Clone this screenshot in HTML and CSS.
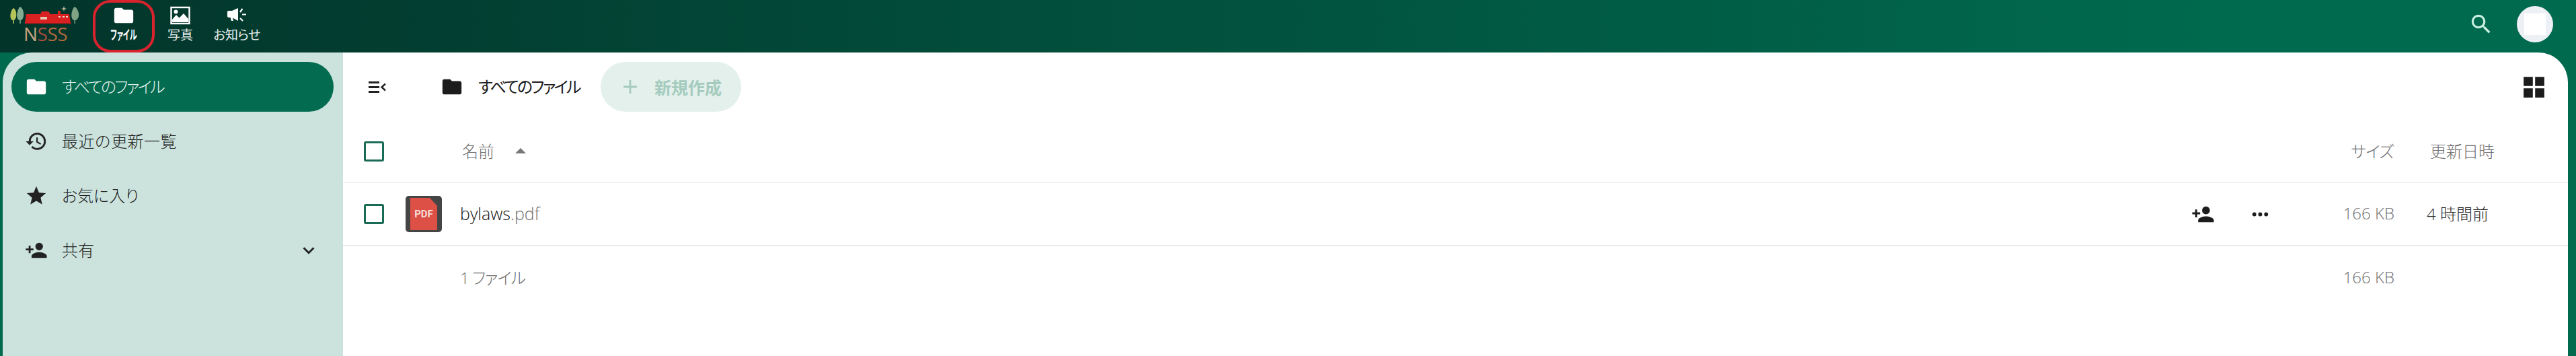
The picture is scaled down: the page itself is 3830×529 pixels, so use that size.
FILE: index.html
```html
<!DOCTYPE html>
<html lang="ja">
<head>
    <meta charset="UTF-8">
    <meta name="viewport" content="width=device-width, initial-scale=1.0">
    <title>すべてのファイル - NSSS</title>
    <link rel="stylesheet" href="styles.css">
</head>
<body>
    <svg class="sprite" xmlns="http://www.w3.org/2000/svg">
        <symbol id="i-folder" viewBox="0 0 24 24"><path d="M10,4H4C2.89,4 2,4.89 2,6V18A2,2 0 0,0 4,20H20A2,2 0 0,0 22,18V8C22,6.89 21.1,6 20,6H12L10,4Z"/></symbol>
        <symbol id="i-history" viewBox="0 0 24 24"><path d="M13.5,8H12V13L16.28,15.54L17,14.33L13.5,12.25V8M13,3A9,9 0 0,0 4,12H1L4.96,16.03L9,12H6A7,7 0 0,1 13,5A7,7 0 0,1 20,12A7,7 0 0,1 13,19C11.07,19 9.32,18.21 8.06,16.94L6.64,18.36C8.27,20 10.5,21 13,21A9,9 0 0,0 22,12A9,9 0 0,0 13,3"/></symbol>
        <symbol id="i-star" viewBox="0 0 24 24"><path d="M12,17.27L18.18,21L16.54,13.97L22,9.24L14.81,8.62L12,2L9.19,8.62L2,9.24L7.45,13.97L5.82,21L12,17.27Z"/></symbol>
        <symbol id="i-share" viewBox="0 0 24 24"><path d="M15,14C12.33,14 7,15.33 7,18V20H23V18C23,15.33 17.67,14 15,14M6,10V7H4V10H1V12H4V15H6V12H9V10M15,12A4,4 0 0,0 19,8A4,4 0 0,0 15,4A4,4 0 0,0 11,8A4,4 0 0,0 15,12Z"/></symbol>
        <symbol id="i-chevron" viewBox="0 0 24 24"><path d="M7.41,8.58L12,13.17L16.59,8.58L18,10L12,16L6,10L7.41,8.58Z"/></symbol>
        <symbol id="i-search" viewBox="0 0 24 24"><path d="M9.5,3A6.5,6.5 0 0,1 16,9.5C16,11.11 15.41,12.59 14.44,13.73L14.71,14H15.5L20.5,19L19,20.5L14,15.5V14.71L13.73,14.44C12.59,15.41 11.11,16 9.5,16A6.5,6.5 0 0,1 3,9.5A6.5,6.5 0 0,1 9.5,3M9.5,5C7,5 5,7 5,9.5C5,12 7,14 9.5,14C12,14 14,12 14,9.5C14,7 12,5 9.5,5Z"/></symbol>
        <symbol id="i-grid" viewBox="0 0 24 24"><path d="M3,11H11V3H3M3,21H11V13H3M13,21H21V13H13M13,3V11H21V3"/></symbol>
        <symbol id="i-dots" viewBox="0 0 24 24"><path d="M16,12A2,2 0 0,1 18,10A2,2 0 0,1 20,12A2,2 0 0,1 18,14A2,2 0 0,1 16,12M10,12A2,2 0 0,1 12,10A2,2 0 0,1 14,12A2,2 0 0,1 12,14A2,2 0 0,1 10,12M4,12A2,2 0 0,1 6,10A2,2 0 0,1 8,12A2,2 0 0,1 6,14A2,2 0 0,1 4,12Z"/></symbol>
        <symbol id="i-plus" viewBox="0 0 24 24"><path d="M19,13H13V19H11V13H5V11H11V5H13V11H19V13Z"/></symbol>
    </svg>

    <header class="topbar">
        <a class="logo">
            <svg class="logo-art" viewBox="0 0 130 28" xmlns="http://www.w3.org/2000/svg">
                <path d="M20,3 C24,5 25,12 24,16 C23,20 21,21 20.8,21 V26 H19.2 V21 C18,21 16,20 15.5,16 C15,12 17,5 20,3Z" fill="#b5c45a"/>
                <path d="M30,1 C34,3 36,10 35,15 C34,20 32,21 30.8,21 V26 H29.2 V21 C28,21 26,20 25.3,15 C25,10 27,3 30,1Z" fill="#83ab8f"/>
                <path d="M111,1 C115,3 118,10 117,15 C116,20 113,21 112,21 V26 H110.5 V21 C109,21 107,20 106.3,15 C106,10 108,3 111,1Z" fill="#7fa383"/>
                <path d="M37,25 L39,12 H60 L62,8 H72 L75,12 H86 V7 H90 V12 H103 L105,25Z" fill="#d92122"/>
                <rect x="37" y="25" width="69" height="1.5" fill="#a51c1c"/>
                <rect x="60" y="16" width="10" height="4" fill="#e8c7b0"/>
                <rect x="87" y="15" width="3" height="2" fill="#f3d9c8"/>
                <rect x="93" y="15" width="3" height="2" fill="#f3d9c8"/>
                <rect x="98" y="15" width="3" height="2" fill="#f3d9c8"/>
                <path d="M95,0 L96,3 L99,4 L96,5 L95,8 L94,5 L91,4 L94,3Z" fill="#b9b59a"/>
            </svg>
            <span class="logo-name"><span class="n1">N</span><span class="n2">S</span><span class="n3">S</span><span class="n3">S</span></span>
        </a>
        <nav class="app-nav">
            <a class="app-item active">
                <svg class="app-icon"><use href="#i-folder"/></svg>
                <span>ファイル</span>
            </a>
            <a class="app-item">
                <svg class="app-icon" viewBox="0 0 34 34" xmlns="http://www.w3.org/2000/svg">
                    <rect x="3.5" y="5" width="27" height="24" fill="none" stroke="#fff" stroke-width="2.4"/>
                    <circle cx="10.5" cy="11.5" r="3" fill="#fff"/>
                    <path d="M5,27 V23 L11,16 L15.500,20.500 L22,14 L29,22 V27Z" fill="#fff"/>
                </svg>
                <span>写真</span>
            </a>
            <a class="app-item">
                <svg class="app-icon" viewBox="0 0 34 34" xmlns="http://www.w3.org/2000/svg">
                    <path d="M3,12 C3,10.500 4,10 5,10 H10 L19,6 V25 L11,20.500 L12,25 H9 L7.500,20 H5 C4,20 3,19 3,18Z" fill="#fff"/>
                    <path d="M22,12 L25.500,7 M25,15.500 H31 M22,21 L26,25" stroke="#fff" stroke-width="2.200" fill="none"/>
                </svg>
                <span class="notice-label">お知らせ</span>
            </a>
        </nav>
        <div class="top-right">
            <svg class="search-icon"><use href="#i-search"/></svg>
            <div class="avatar"><div class="avatar-img"></div></div>
        </div>
    </header>

    <div class="content">
        <aside class="sidebar">
            <a class="side-item current">
                <svg class="side-icon"><use href="#i-folder"/></svg>
                <span class="kana">すべてのファイル</span>
            </a>
            <a class="side-item">
                <svg class="side-icon"><use href="#i-history"/></svg>
                <span class="full">最近の更新一覧</span>
            </a>
            <a class="side-item">
                <svg class="side-icon"><use href="#i-star"/></svg>
                <span>お気に入り</span>
            </a>
            <a class="side-item">
                <svg class="side-icon"><use href="#i-share"/></svg>
                <span>共有</span>
                <svg class="side-icon side-chevron"><use href="#i-chevron"/></svg>
            </a>
        </aside>

        <main class="files">
            <div class="toolbar">
                <svg class="toggle-icon" viewBox="0 0 26 17" xmlns="http://www.w3.org/2000/svg">
                    <path d="M0,1.500 H16 M0,8.500 H16 M0,15.500 H16" stroke="#222" stroke-width="3" fill="none"/>
                    <path d="M25,3.500 L19.500,8.500 L25,13.500" stroke="#222" stroke-width="2.400" fill="none"/>
                </svg>
                <svg class="crumb-icon"><use href="#i-folder"/></svg>
                <span class="crumb-text kana">すべてのファイル</span>
                <button class="new-btn" type="button">
                    <svg class="plus-icon"><use href="#i-plus"/></svg>
                    <span>新規作成</span>
                </button>
                <svg class="grid-icon"><use href="#i-grid"/></svg>
            </div>

            <div class="row head-row">
                <div class="cell-check"><span class="checkbox"></span></div>
                <div></div>
                <div class="cell-name head-name">名前<span class="sort-arrow"></span></div>
                <div></div>
                <div></div>
                <div class="cell-size head-size">サイズ</div>
                <div class="cell-date head-date">更新日時</div>
            </div>

            <div class="row file-row">
                <div class="cell-check"><span class="checkbox"></span></div>
                <div class="cell-icon">
                    <svg class="pdf-icon" viewBox="0 0 54 54" xmlns="http://www.w3.org/2000/svg">
                        <rect width="54" height="54" rx="5" fill="#454545"/>
                        <path d="M7,3 H36 L47,15 V51 H7Z" fill="#dc5046"/>
                        <text x="27" y="32" text-anchor="middle" class="pdf-label">PDF</text>
                    </svg>
                </div>
                <div class="cell-name file-name">bylaws<span class="ext">.pdf</span></div>
                <div class="cell-action"><svg class="row-icon"><use href="#i-share"/></svg></div>
                <div class="cell-action"><svg class="row-icon"><use href="#i-dots"/></svg></div>
                <div class="cell-size">166 KB</div>
                <div class="cell-date">4 時間前</div>
            </div>

            <div class="row foot-row">
                <div></div>
                <div></div>
                <div class="cell-name foot-name">1 ファイル</div>
                <div></div>
                <div></div>
                <div class="cell-size">166 KB</div>
                <div></div>
            </div>
        </main>
    </div>
</body>
</html>
```

FILE: styles.css
```css
* {
    box-sizing: border-box;
}
html, body {
    height: 100%;
}
body {
    margin: 0;
    display: flex;
    flex-direction: column;
    background-color: #006a4e;
    color: #1c1c1c;
    font-family: "Open Sans", "Noto Sans CJK JP", sans-serif;
    font-size: 24px;
    font-weight: 300;
    font-feature-settings: "palt";
    overflow: hidden;
}
.sprite {
    display: none;
}
svg {
    display: block;
    flex: none;
    fill: currentColor;
}
.kana {
    letter-spacing: -2.6px;
}
.full {
    font-feature-settings: normal;
    letter-spacing: 0.4px;
}

/* top bar */
.topbar {
    display: flex;
    flex: none;
    align-items: center;
    height: 78px;
    background: linear-gradient(90deg, #03342a 0%, #006a4e 86%);
}
.logo {
    display: flex;
    flex-direction: column;
    flex: none;
    width: 142px;
    padding-top: 9px;
    height: 100%;
}
.logo-art {
    width: 130px;
    height: 28px;
}
.logo-name {
    margin: 0 0 0 35px;
    font-size: 28px;
    font-weight: 400;
    line-height: 27px;
    letter-spacing: -0.5px;
}
.n1 { color: #c6a67e; }
.n2 { color: #a94c3c; }
.n3 { color: #b2683f; }
.app-nav {
    display: flex;
    height: 100%;
}
.app-item {
    position: relative;
    display: flex;
    flex-direction: column;
    align-items: center;
    width: 84px;
    padding-top: 6px;
    color: #e8efec;
    font-size: 19px;
    font-weight: 400;
    line-height: 24px;
}
.app-icon {
    width: 34px;
    height: 34px;
    color: #fff;
}
.notice-label {
    letter-spacing: -0.5px;
}
.app-item.active {
    color: #fff;
    font-weight: 700;
}
.app-item.active span {
    transform: scaleX(0.58);
    white-space: nowrap;
}
.app-item.active::after {
    content: "";
    position: absolute;
    inset: 0 -4px;
    border: 4px solid #d9232e;
    border-radius: 26px;
}
.top-right {
    display: flex;
    align-items: center;
    gap: 34px;
    margin-left: auto;
    padding: 0 34px 6px 0;
}
.search-icon {
    width: 38px;
    height: 38px;
    color: #c9efe0;
}
.avatar {
    display: flex;
    align-items: center;
    justify-content: center;
    width: 54px;
    height: 54px;
    border-radius: 50%;
    background-color: #edf0f5;
}
.avatar-img {
    width: 32px;
    height: 32px;
    background-color: #fff;
}

/* page below the bar */
.content {
    display: flex;
    flex: 1;
    min-height: 0;
    padding: 0 12px 0 4px;
}
.sidebar {
    display: flex;
    flex-direction: column;
    flex: none;
    gap: 7px;
    width: 506px;
    padding: 14px 14px 0 13px;
    background-color: #cce3dd;
    border-top-left-radius: 44px;
}
.side-item {
    display: flex;
    align-items: center;
    gap: 21px;
    height: 74px;
    padding: 0 20px;
    border-radius: 37px;
    color: #222;
}
.side-item span {
    padding-bottom: 3px;
}
.side-item.current {
    background-color: #036c50;
    color: #e6f3ef;
}
.side-icon {
    width: 34px;
    height: 34px;
    color: #222;
}
.current .side-icon {
    color: #fff;
}
.side-chevron {
    margin-left: auto;
}

/* file list */
.files {
    flex: 1;
    min-width: 0;
    background-color: #fff;
    border-top-right-radius: 44px;
}
.toolbar {
    display: flex;
    align-items: center;
    height: 74px;
    margin-top: 14px;
    padding: 0 30px 0 38px;
}
.toggle-icon {
    width: 26px;
    height: 17px;
}
.crumb-icon {
    width: 34px;
    height: 34px;
    margin-left: 81px;
}
.crumb-text {
    margin-left: 22px;
    padding-bottom: 3px;
    font-weight: 400;
}
.new-btn {
    display: flex;
    align-items: center;
    gap: 19px;
    height: 74px;
    margin-left: 31px;
    padding: 0 29px 0 27px;
    border: none;
    border-radius: 37px;
    background-color: #e3f0ec;
    color: #a5cbbe;
    font: inherit;
    font-size: 25px;
    font-weight: 700;
    font-feature-settings: inherit;
}
.plus-icon {
    width: 34px;
    height: 34px;
}
.grid-icon {
    width: 41px;
    height: 41px;
    margin-left: auto;
}
.row {
    display: grid;
    grid-template-columns: 93px 81px 1fr 50px 120px 140px 258px;
    align-items: center;
    border-bottom: 1px solid #ececec;
}
.head-row {
    height: 93px;
    margin-top: 13px;
    color: #6f6f6f;
}
.file-row {
    height: 94px;
    border-bottom-width: 2px;
}
.foot-row {
    height: 94px;
    border-bottom: none;
    color: #6f6f6f;
}
.cell-check {
    padding-left: 31px;
}
.checkbox {
    display: block;
    width: 30px;
    height: 30px;
    border: 3px solid #1a6b55;
    border-radius: 3px;
}
.cell-icon {
    display: flex;
}
.pdf-icon {
    width: 54px;
    height: 54px;
}
.pdf-label {
    fill: #f7dcd8;
    font-family: Roboto, sans-serif;
    font-size: 15px;
    font-weight: 700;
}
.ext {
    color: #6f6f6f;
}
.cell-name, .cell-size, .cell-date {
    padding-bottom: 3px;
}
.file-name {
    font-size: 25px;
    color: #111;
}
.head-name {
    display: flex;
    align-items: center;
    margin-left: 3px;
}
.foot-name {
    letter-spacing: -1px;
}
.sort-arrow {
    width: 0;
    height: 0;
    margin-left: 31px;
    border-left: 8px solid transparent;
    border-right: 8px solid transparent;
    border-bottom: 8px solid #777;
}
.cell-action {
    display: flex;
    justify-content: center;
}
.row-icon {
    width: 35px;
    height: 35px;
}
.cell-size {
    color: #6f6f6f;
    text-align: right;
}
.head-size {
    margin-right: 1px;
    letter-spacing: -0.5px;
}
.cell-date {
    padding-left: 48px;
    color: #2b2b2b;
}
.head-date {
    padding-left: 53px;
    color: #6f6f6f;
}
```
